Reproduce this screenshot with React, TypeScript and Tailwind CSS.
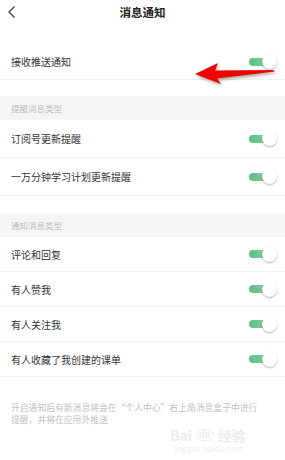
import React from "react";

const font = { fontFamily: '"Noto Sans CJK SC", "Noto Sans", sans-serif' };

function Toggle() {
  return (
    <div className="relative h-[15px] w-[28px]">
      <div className="absolute left-0 top-[3.5px] h-[8px] w-[22px] rounded-full bg-gradient-to-r from-[#5cbd86] to-[#8dd3a8]" />
      <div className="absolute right-0 top-0 h-[15px] w-[15px] rounded-full bg-white shadow-[0_1px_2px_rgba(0,0,0,0.3)]" />
    </div>
  );
}

function Row({ label, h = "h-[35px]" }: { label: string; h?: string }) {
  return (
    <div className={`flex ${h} items-center justify-between border-b border-[#f1f1f1] pl-[11px] pr-[8px]`}>
      <span className="text-[10px] text-[#333]">{label}</span>
      <Toggle />
    </div>
  );
}

function SectionHeader({ label }: { label: string }) {
  return (
    <div className="flex h-[24px] items-center bg-[#f4f5f7] pl-[11px] text-[8.5px] text-[#bdbdbd]">
      {label}
    </div>
  );
}

export default function App() {
  return (
    <div className="relative h-[460px] w-[285px] overflow-hidden bg-white" style={font}>
      {/* Header */}
      <div className="relative flex h-[25px] items-center justify-center">
        <svg className="absolute left-[7px] top-[5px]" width="10" height="14" viewBox="0 0 10 14">
          <path d="M7.5 1.5 L2 7 L7.5 12.5" fill="none" stroke="#444" strokeWidth="1.4" />
        </svg>
        <span className="text-[11.5px] font-bold text-[#222]">消息通知</span>
      </div>

      <div className="pt-[19px]">
        <Row label="接收推送通知" h="h-[36px]" />
      </div>
      <div className="h-[16px]" />

      <SectionHeader label="提醒消息类型" />
      <Row label="订阅号更新提醒" h="h-[38px]" />
      <Row label="一万分钟学习计划更新提醒" h="h-[38px]" />
      <div className="h-[17px]" />

      <SectionHeader label="通知消息类型" />
      <Row label="评论和回复" />
      <Row label="有人赞我" />
      <Row label="有人关注我" />
      <Row label="有人收藏了我创建的课单" />

      <p className="pl-[11px] pr-[24px] pt-[25px] text-[8.8px] leading-[12px] text-[#c2c2c2]">
        开启通知后有新消息将会在“个人中心”右上角消息盒子中进行提醒，并将在应用外推送
      </p>

      {/* Watermark */}
      <div className="pointer-events-none absolute left-[170px] top-[427px] flex flex-col items-center">
        <div className="flex h-[16px] items-center gap-[4px] text-[14px] font-bold leading-[16px] text-[#ededed]">
          <span>Bai</span>
          <span className="rounded-full border border-[#ececec] px-[2px] text-[9px] leading-[10px]">du</span>
          <span>经验</span>
        </div>
        <span className="mt-[1px] text-[8px] leading-[9px] text-[#ededed]">jingyan.baidu.com</span>
      </div>

      {/* Red arrow overlay */}
      <svg
        className="pointer-events-none absolute left-[193px] top-[60px]"
        width="88"
        height="30"
        viewBox="0 0 88 30"
        style={{ filter: "drop-shadow(1px 2px 1.5px rgba(0,0,0,0.35))" }}
      >
        <polygon points="2,14 25,3 22,10.5 80,10 82,11.5 24,18.5 28,24" fill="#ee0000" />
      </svg>
    </div>
  );
}
